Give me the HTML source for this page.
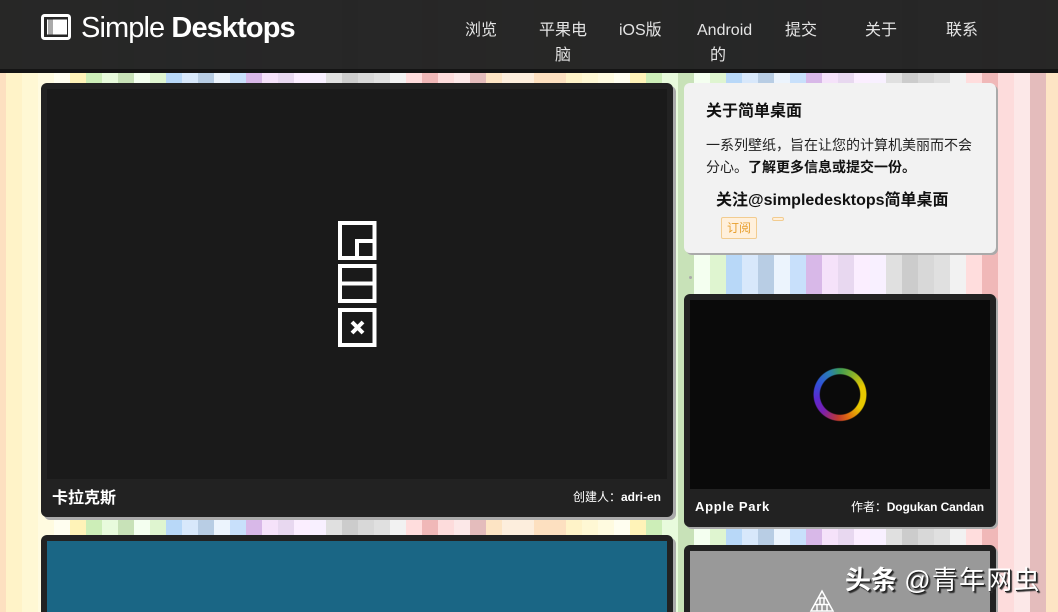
<!DOCTYPE html>
<html lang="zh"><head><meta charset="utf-8"><title>Simple Desktops</title>
<style>
html,body{margin:0;padding:0;width:1058px;height:612px;overflow:hidden;background:#fff}
body{position:relative;font-family:"Liberation Sans","WenQuanYi Zen Hei","Noto Sans CJK SC",sans-serif}
.a{position:absolute;white-space:nowrap}
#bg{left:0;top:0;width:1058px;height:612px;background-position:6px 0;background-size:560px 100%;background-image:linear-gradient(90deg,
#fff3c8 0 16px,#fff8d4 16px 32px,#fffbe0 32px 48px,#fffef0 48px 64px,#fff3b8 64px 80px,#cdeeb8 80px 96px,#e8fbdc 96px 112px,#c8e2b8 112px 128px,#f4fff0 128px 144px,#dff5d0 144px 160px,#b8d8f8 160px 176px,#d8e8fb 176px 192px,#b8cde4 192px 208px,#ecf4fd 208px 224px,#c8e0fb 224px 240px,#d8b8e8 240px 256px,#f5e2fa 256px 272px,#e8d8f0 272px 288px,#fbeeff 288px 304px,#f8f0ff 304px 320px,#e0e0e0 320px 336px,#ccc 336px 352px,#d8d8d8 352px 368px,#e0e0e0 368px 384px,#f2f2f2 384px 400px,#fdd 400px 416px,#f0b8b8 416px 432px,#fddcdc 432px 448px,#fce8e8 448px 464px,#e4bcbc 464px 480px,#fde4c4 480px 496px,#fdeedd 496px 528px,#fde0c0 528px 560px)}
#hd{left:0;top:0;width:1058px;height:69px;background:rgba(36,36,36,.985);border-bottom:4px solid #141414}
.nav{font-size:16px;line-height:25px;color:#e4e4e4;text-align:center;font-family:"Liberation Sans","WenQuanYi Zen Hei",sans-serif}
.card{background:#222;border-radius:6px;box-shadow:3px 3px 0 #aaa}
.t{color:#fff;font-weight:bold}
</style></head><body>
<div id="bg" class="a"></div>
<div id="hd" class="a"></div>
<svg class="a" style="left:41px;top:14px" width="31" height="27" viewBox="0 0 31 27"><rect x="1.500" y="1.500" width="27" height="23" rx="2" fill="none" stroke="#fff" stroke-width="3"/><rect x="6" y="5.500" width="20" height="15" fill="#fff"/><rect x="7" y="5.500" width="5" height="15" fill="#aaa"/></svg>
<div class="a" style="left:81px;top:10px;font-size:29px;line-height:36px;letter-spacing:-.9px;color:#fff">Simple <b>Desktops</b></div>

<div class="a nav" style="left:465px;top:18px">浏览</div>
<div class="a nav" style="left:539px;top:18px;width:48px;white-space:normal">平果电脑</div>
<div class="a nav" style="left:619px;top:18px">iOS版</div>
<div class="a nav" style="left:697px;top:18px;width:54px;text-align:left">Android</div>
<div class="a nav" style="left:710px;top:43px">的</div>
<div class="a nav" style="left:785px;top:18px">提交</div>
<div class="a nav" style="left:865px;top:18px">关于</div>
<div class="a nav" style="left:946px;top:18px">联系</div>

<div class="a card" style="left:41px;top:83px;width:632px;height:434px"></div>
<div class="a" style="left:47px;top:89px;width:620px;height:390px;background:#1a1a1a"></div>
<svg class="a" style="left:337px;top:220px" width="41" height="128" viewBox="0 0 41 128" fill="none" stroke="#fff" stroke-width="4">
<rect x="3" y="3" width="34.500" height="35"/><path d="M20 38V21H37"/>
<rect x="3" y="46" width="34.500" height="35"/><path d="M3 63.500H37"/>
<rect x="3" y="90" width="34.500" height="35"/><path d="M15 102L26 113M26 102L15 113" stroke-width="4"/>
</svg>
<div class="a t" style="left:52px;top:489px;font-size:16px;line-height:20px">卡拉克斯</div>
<div class="a t" style="right:397px;top:489px;font-size:12px;line-height:16px"><span style="font-weight:normal">创建人：</span>adri-en</div>

<div class="a card" style="left:41px;top:535px;width:632px;height:90px"></div>
<div class="a" style="left:47px;top:541px;width:620px;height:71px;background:#1a6685"></div>

<div class="a" style="left:684px;top:83px;width:312px;height:170px;background:#f2f2f2;border-radius:6px;box-shadow:2px 2px 0 #aaa"></div>
<div class="a" style="left:706px;top:102px;font-size:16px;line-height:20px;font-weight:bold;color:#111">关于简单桌面</div>
<div class="a" style="left:706px;top:134px;font-size:14px;line-height:22px;width:270px;color:#222;white-space:normal">一系列壁纸，旨在让您的计算机美丽而不会<br>分心。<b style="color:#111">了解更多信息或提交一份。</b></div>
<div class="a" style="left:716px;top:191px;font-size:16px;line-height:20px;font-weight:bold;color:#111">关注@simpledesktops简单桌面</div>
<div class="a" style="left:721px;top:217px;width:34px;height:20px;background:#fff0dc;border:1px solid #f2cc90;border-radius:2px;font-size:12px;line-height:20px;text-align:center;color:#e8a030">订阅</div>
<div class="a" style="left:772px;top:217px;width:10px;height:2px;background:#fff0dc;border:1px solid #f2cc90;border-radius:2px"></div>
<div class="a" style="left:689px;top:276px;width:3px;height:3px;background:#aaa;border-radius:50%"></div>

<div class="a card" style="left:684px;top:294px;width:312px;height:233px;box-shadow:2px 2px 0 #aaa"></div>
<div class="a" style="left:690px;top:300px;width:300px;height:189px;background:#0a0a0a"></div>
<div class="a" style="left:813px;top:367px;width:54px;height:55px;border-radius:50%;background:conic-gradient(#3f9c55 0deg,#7fb030 30deg,#e8c800 70deg,#e8c800 125deg,#e06a10 160deg,#c03a30 185deg,#7a1fb0 225deg,#5a2ad0 260deg,#2f55d8 300deg,#2a80b0 335deg,#3f9c55 360deg);-webkit-mask:radial-gradient(circle closest-side,transparent 73%,#000 77%,#000 96%,transparent 100%);mask:radial-gradient(circle closest-side,transparent 73%,#000 77%,#000 96%,transparent 100%)"></div>
<div class="a t" style="left:695px;top:499px;font-size:13px;line-height:16px;letter-spacing:.7px">Apple Park</div>
<div class="a t" style="right:74px;top:499px;font-size:12px;line-height:16px;letter-spacing:-.1px"><span style="font-weight:normal">作者：</span>Dogukan Candan</div>

<div class="a card" style="left:684px;top:545px;width:312px;height:80px;box-shadow:2px 2px 0 #aaa"></div>
<div class="a" style="left:690px;top:551px;width:300px;height:61px;background:#999"></div>
<svg class="a" style="left:809px;top:589px" width="26" height="23" viewBox="0 0 26 23" fill="none" stroke="#fff" stroke-width="1.500"><path d="M13 2L24 22H2Z"/><path d="M9 9H17M6 15.500H20M11 9V15.500M15 9V15.500M8 15.500V22M13 15.500V22M18 15.500V22"/></svg>

<div class="a" style="left:845px;top:564px;font-size:26px;line-height:32px;color:#fff;text-shadow:1px 1px 0 #222,2px 2px 1px #333;font-family:'Liberation Sans','Noto Sans CJK SC',sans-serif"><b>头条</b> <span style="letter-spacing:1.2px">@青年网虫</span></div>
</body></html>
